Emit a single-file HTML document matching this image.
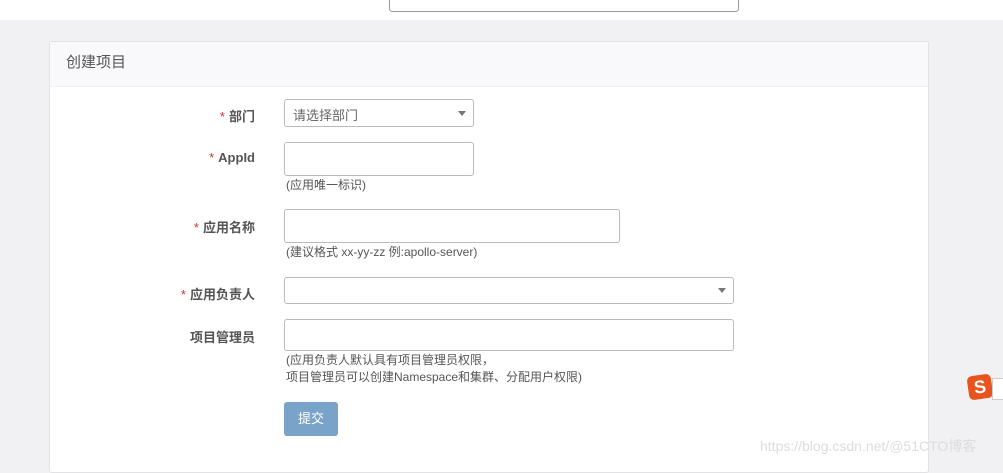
<!DOCTYPE html><html><head><meta charset="utf-8"><style>
body{margin:0;width:1003px;height:464px;background:#f1f1f4;font-family:"Liberation Sans","Noto Sans CJK SC",sans-serif;position:relative;overflow:hidden;font-size:13px;color:#333}
.top{position:absolute;left:0;top:0;width:1003px;height:20px;background:#fff}
.search{position:absolute;left:389px;top:-10px;width:348px;height:20px;border:1px solid #999;border-radius:3px;background:#fff}
.panel{position:absolute;left:49px;top:41px;width:878px;height:430px;background:#fff;border:1px solid #e2e2e6;border-radius:3px}
.hd{height:44px;background:#f9f9fb;border-bottom:1px solid #f0f0f0;font-size:15px;color:#555;line-height:42px;padding-left:16px}
.lab{position:absolute;right:748px;font-weight:bold;color:#555;font-size:13px;text-align:right;white-space:nowrap}
.lab i{color:#c33;font-style:normal;font-weight:normal;margin-right:4px}
.in{position:absolute;border:1px solid #bbb;border-radius:3px;background:#fff;box-sizing:border-box}
.hint{position:absolute;left:286px;font-size:12px;color:#555;line-height:17px}
.arr{position:absolute;right:7px;top:11px;border:4px solid transparent;border-top:5px solid #777;border-bottom:0}
</style></head><body>
<div class="top"><div class="search"></div></div>
<div class="panel"><div class="hd">创建项目</div></div>
<div class="lab" style="top:106px;"><i>*</i>部门</div>
<div class="in" style="left:284px;top:99px;width:190px;height:28px;"><span style="position:absolute;left:8px;top:5px;color:#666">请选择部门</span><div class="arr"></div></div>
<div class="lab" style="top:150px;"><i>*</i>AppId</div>
<div class="in" style="left:284px;top:142px;width:190px;height:34px;"></div>
<div class="hint" style="top:177px">(应用唯一标识)</div>
<div class="lab" style="top:217px;"><i>*</i>应用名称</div>
<div class="in" style="left:284px;top:209px;width:336px;height:34px;"></div>
<div class="hint" style="top:244px">(建议格式 xx-yy-zz 例:apollo-server)</div>
<div class="lab" style="top:284px;"><i>*</i>应用负责人</div>
<div class="in" style="left:284px;top:277px;width:450px;height:27px;"><div class="arr" style="top:10px"></div></div>
<div class="lab" style="top:327px;">项目管理员</div>
<div class="in" style="left:284px;top:319px;width:450px;height:32px;"></div>
<div class="hint" style="top:352px">(应用负责人默认具有项目管理员权限，<br>项目管理员可以创建Namespace和集群、分配用户权限)</div>
<div style="position:absolute;left:284px;top:402px;width:54px;height:34px;background:#7aa3c9;border-radius:3px;color:#fff;text-align:center;line-height:34px;font-size:13px">提交</div>
<div style="position:absolute;left:968px;top:375px;width:24px;height:24px;background:#e8541e;border-radius:5px;transform:rotate(-8deg);color:#fff;font-weight:bold;text-align:center;line-height:24px;font-size:18px">S</div>
<div style="position:absolute;left:992px;top:378px;width:11px;height:20px;background:#fff;border:1px solid #ccc"></div>
<div style="position:absolute;left:760px;top:436px;color:#ddd;font-size:14px">https://blog.csdn.net/@51CTO博客</div>
</body></html>
